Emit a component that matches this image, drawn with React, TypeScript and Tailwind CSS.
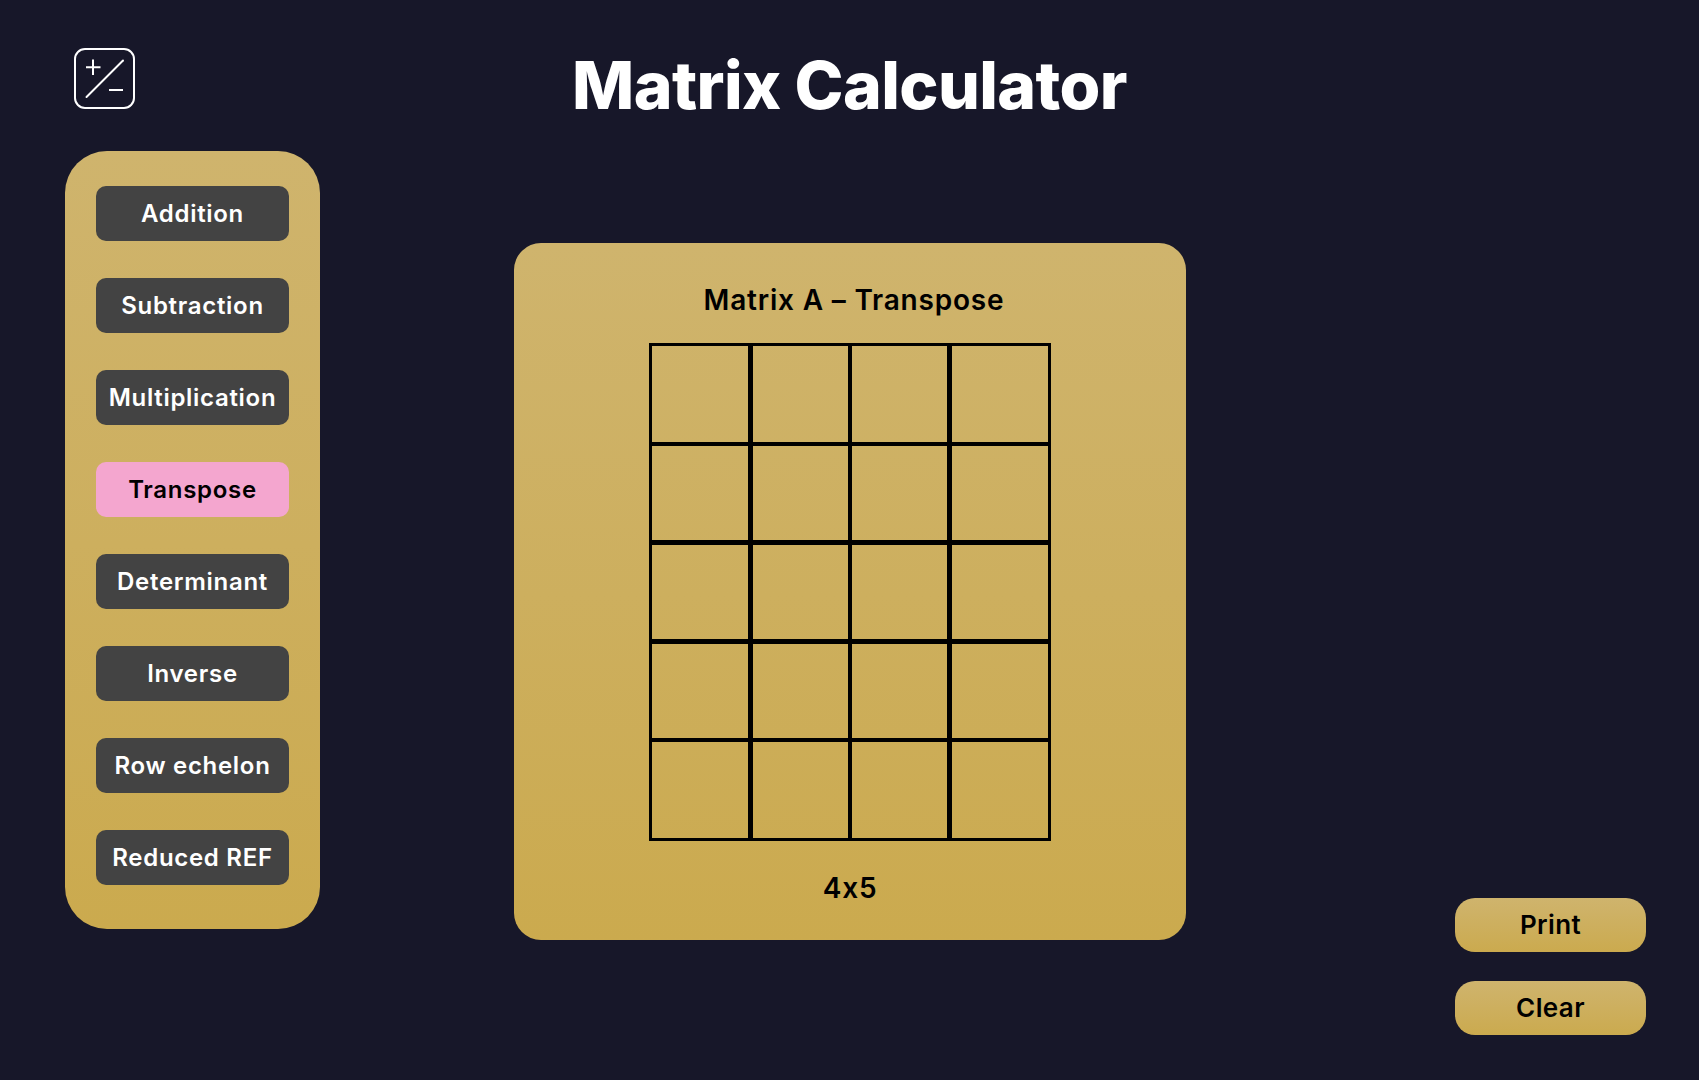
const operations = [
  "Addition",
  "Subtraction",
  "Multiplication",
  "Transpose",
  "Determinant",
  "Inverse",
  "Row echelon",
  "Reduced REF",
]

// line widths differ a little from column to column and row to row
const columns = [
  "w-[102px] border-l-[3px] border-r-[3px]",
  "w-[99px] border-l-2 border-r-2",
  "w-[100px] border-l-2 border-r-[3px]",
  "w-[101px] border-l-2 border-r-[3px]",
]
const rows = [
  "h-[101px] border-t-[3px] border-b-2",
  "h-[99px] border-t-2 border-b-[3px]",
  "h-[99px] border-t-2 border-b-[3px]",
  "h-[98px] border-t-2 border-b-2",
  "h-[101px] border-t-2 border-b-[3px]",
]

const font = "font-['Inter','Liberation_Sans',sans-serif] [font-feature-settings:'calt'_0]"

function Logo() {
  return (
    <svg width="61" height="61" viewBox="0 0 61 61" fill="none" stroke="white" strokeWidth="2" strokeLinecap="round">
      <rect x="1" y="1" width="59" height="59" rx="10" />
      <path d="M12 19.3h14.5M19 11.5v15.5" strokeLinecap="butt" />
      <path d="M12.5 49L49 12.5" />
      <path d="M35 42h14" strokeLinecap="butt" />
    </svg>
  )
}

export default function App() {
  return (
    <div className={`${font} h-[1080px] w-full overflow-hidden bg-[#171729] text-black`}>
      <header className="grid h-[151px] grid-cols-[1fr_auto_1fr] pl-[74px]">
        <div className="pt-[48px]">
          <Logo />
        </div>
        <h1 className="pr-[74px] pt-[48px] text-[66px] leading-[75px] font-extrabold tracking-[-0.6px] text-white">
          Matrix Calculator
        </h1>
      </header>

      <div className="flex pl-[65px] pr-[53px]">
        <nav className="flex h-[778px] w-[255px] flex-col gap-[37px] rounded-[42px] bg-gradient-to-b from-[#cfb46d] to-[#cbaa4e] pl-[31px] pt-[35px]">
          {operations.map((op) => (
            <button
              key={op}
              className={`h-[55px] w-[193px] rounded-[10px] pt-[1px] text-[24px] font-semibold tracking-[0.7px] whitespace-nowrap ${
                op === "Transpose" ? "bg-[#f4a6cf] text-black" : "bg-[#434343] text-white"
              }`}
            >
              {op}
            </button>
          ))}
        </nav>

        <main className="ml-[194px] mt-[92px] flex h-[697px] w-[672px] flex-col items-center rounded-[27px] bg-gradient-to-b from-[#cfb46d] to-[#cbaa4e]">
          <h2 className="ml-[8px] mt-[39px] text-[28px] leading-[36px] font-semibold tracking-[0.8px]">Matrix A – Transpose</h2>
          <div className="mt-[25px] flex flex-col">
            {rows.map((row) => (
              <div key={row} className="flex">
                {columns.map((col) => (
                  <input key={col} className={`${row} ${col} border-black bg-transparent outline-none`} />
                ))}
              </div>
            ))}
          </div>
          <p className="mt-[29px] text-[28px] leading-[36px] font-semibold tracking-[0.8px]">4x5</p>
        </main>

        <div className="ml-auto flex h-[884px] flex-col justify-end gap-[29px]">
          <button className="h-[54px] w-[191px] rounded-[20px] bg-gradient-to-b from-[#cfb46d] to-[#cbaa4e] pb-[2px] text-[26px] font-semibold tracking-[0.4px]">
            Print
          </button>
          <button className="h-[54px] w-[191px] rounded-[20px] bg-gradient-to-b from-[#cfb46d] to-[#cbaa4e] pb-[2px] text-[26px] font-semibold tracking-[0.4px]">
            Clear
          </button>
        </div>
      </div>
    </div>
  )
}
